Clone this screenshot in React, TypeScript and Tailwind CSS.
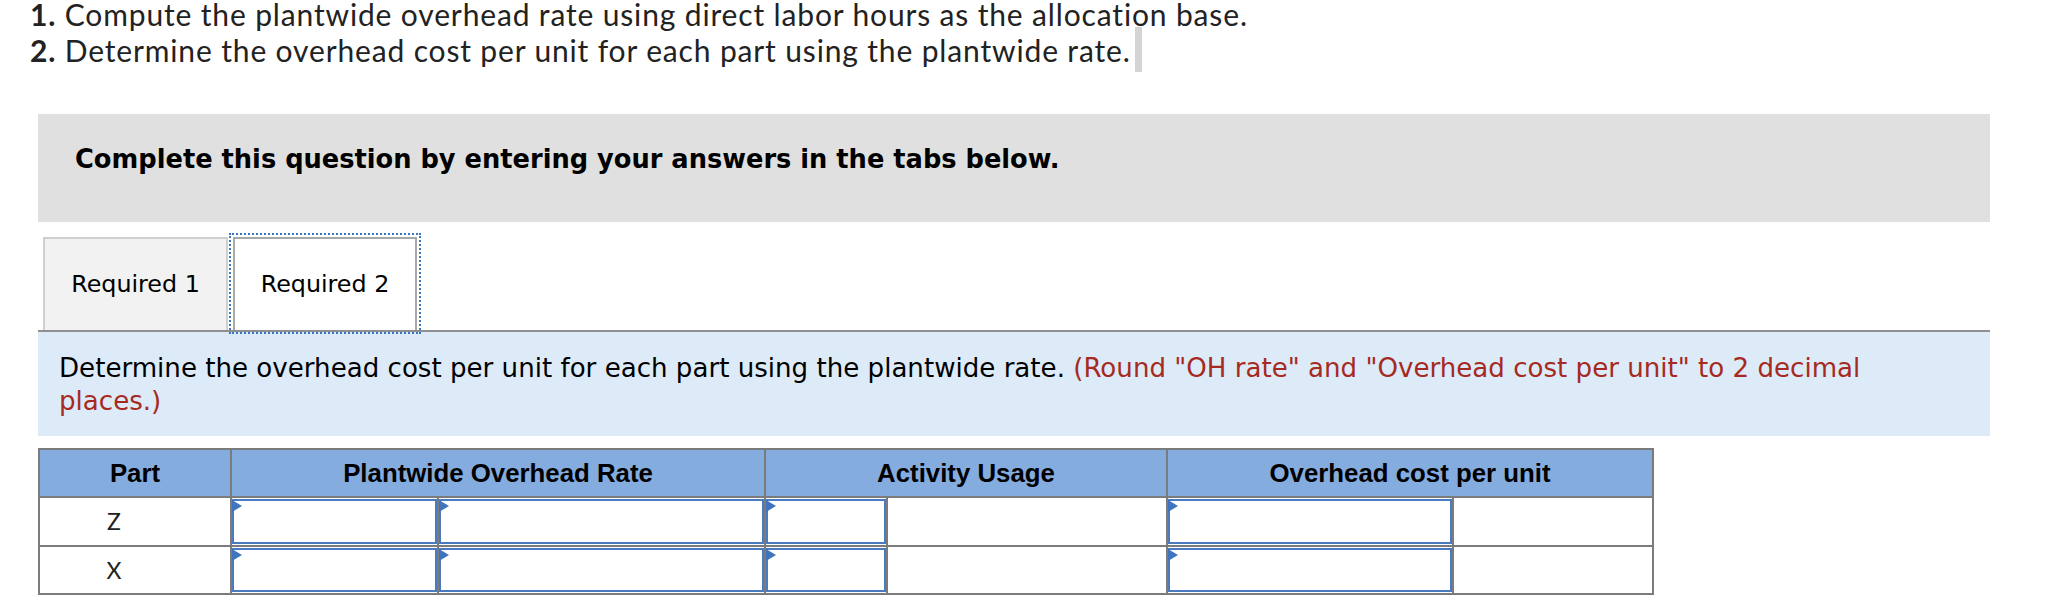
import React from "react";

// answer cell: blue bordered box with the little flag in its top-left corner
function AnswerInput() {
  return (
    <div className="bg-white py-px">
      <div className="relative h-full border-2 border-[#4a7bc0] bg-white">
        <svg
          className="absolute left-[-2px] top-[-1px]"
          width="10"
          height="12"
          viewBox="0 0 10 12"
        >
          <polygon points="0,0 10,6 0,12" fill="#3f74bf" />
        </svg>
      </div>
    </div>
  );
}

function HeaderCell({ children, span }: { children: React.ReactNode; span?: boolean }) {
  return (
    <div
      className={`flex items-center justify-center bg-[#84acdf] text-[25.8px] font-bold text-black ${
        span ? "col-span-2" : ""
      }`}
    >
      {children}
    </div>
  );
}

const rows = ["Z", "X"];

export default function App() {
  return (
    <div className="min-h-screen bg-white">
      <div className="-mt-1 whitespace-nowrap pl-[30px] font-['Lato',sans-serif] text-[30px] leading-[36px] tracking-[0.85px] text-[#222] [font-variant-ligatures:none]">
        <div>
          <b>1.</b> Compute the plantwide overhead rate using direct labor hours as the allocation base.
        </div>
        <div>
          <b>2.</b> Determine the overhead cost per unit for each part using the plantwide rate.
          <span className="ml-[4px] -my-[6px] inline-block h-[45px] w-[7px] bg-[#d4d4d4] align-[-4px]" />
        </div>
      </div>

      <div className="ml-[38px] mt-[46px] w-[1952px] font-['DejaVu_Sans',Verdana,sans-serif]">
        <div className="h-[108px] bg-[#e0e0e0] pl-[37px] pt-[29px] text-[25.7px] font-bold leading-[33px] text-black">
          Complete this question by entering your answers in the tabs below.
        </div>

        <div className="mt-[15px] flex items-end border-b-2 border-[#8f8f8f] pl-[5px]">
          <div className="flex h-[93px] w-[185px] items-center justify-center border-2 border-b-0 border-[#cfcfcf] bg-[#f2f2f2] text-[23.8px] text-black">
            Required 1
          </div>
          <div className="ml-[5px] flex h-[93px] w-[184px] items-center justify-center border-2 border-b-0 border-[#a8a8a8] bg-white text-[23.8px] text-black outline-2 outline-offset-2 outline-[#3b76c4] outline-dotted">
            Required 2
          </div>
        </div>

        <div className="bg-[#ddebf8] pb-[18px] pl-[21px] pr-[60px] pt-[20px] text-[26.1px] leading-[33px] text-black">
          Determine the overhead cost per unit for each part using the plantwide rate.{" "}
          <span className="text-[#a62a22]">
            (Round "OH rate" and "Overhead cost per unit" to 2 decimal places.)
          </span>
        </div>

        <div className="mt-[12px] grid w-[1616px] grid-cols-[190px_205px_325px_120px_278px_284px_198px] grid-rows-[46px_47px_46px] gap-[2px] bg-[#7b7b7b] p-[2px] font-['Liberation_Sans',Arial,sans-serif]">
          <HeaderCell>Part</HeaderCell>
          <HeaderCell span>Plantwide Overhead Rate</HeaderCell>
          <HeaderCell span>Activity Usage</HeaderCell>
          <HeaderCell span>Overhead cost per unit</HeaderCell>

          {rows.map((part) => (
            <React.Fragment key={part}>
              <div className="flex items-center justify-center bg-white pr-[42px] font-['Lato',sans-serif] text-[23px] text-[#222]">
                {part}
              </div>
              <AnswerInput />
              <AnswerInput />
              <AnswerInput />
              <div className="bg-white" />
              <AnswerInput />
              <div className="bg-white" />
            </React.Fragment>
          ))}
        </div>
      </div>
    </div>
  );
}
